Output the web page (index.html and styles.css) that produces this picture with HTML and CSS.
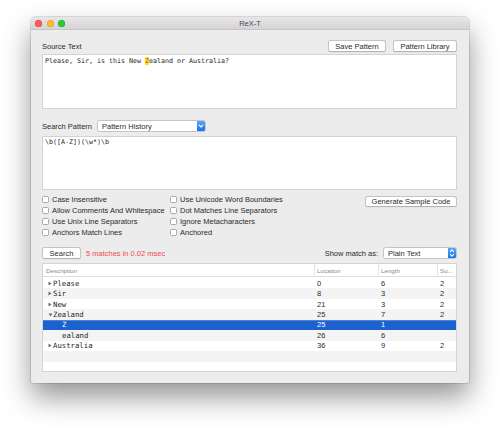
FILE: index.html
```html
<!DOCTYPE html>
<html>
<head>
<meta charset="utf-8">
<title>ReX-T</title>
<link rel="stylesheet" href="styles.css">
</head>
<body>
<div class="window">
  <div class="titlebar">
    <div class="lights">
      <span class="light red"></span>
      <span class="light yellow"></span>
      <span class="light green"></span>
    </div>
    <div class="title">ReX-T</div>
  </div>
  <div class="content">
    <div class="row row-source">
      <span class="label">Source Text</span>
      <div class="btns">
        <button class="btn btn-save">Save Pattern</button>
        <button class="btn btn-lib">Pattern Library</button>
      </div>
    </div>
    <div class="textbox source">Please, Sir, is this New <span class="hl">Z</span>ealand or Australia?</div>
    <div class="row row-pattern">
      <span class="label">Search Pattern</span>
      <div class="popup popup-history">
        <span class="popup-text">Pattern History</span>
        <span class="popup-cap">
          <svg width="8" height="12" viewBox="0 0 8 12"><path d="M2.2 5.2 L4 7 L5.8 5.2" fill="none" stroke="#fff" stroke-width="1.1" stroke-linecap="round" stroke-linejoin="round"/></svg>
        </span>
      </div>
    </div>
    <div class="textbox pattern">\b([A-Z])(\w*)\b</div>
    <div class="options">
      <div class="checks">
        <label class="check"><span class="box"></span>Case Insensitive</label>
        <label class="check"><span class="box"></span>Use Unicode Word Boundaries</label>
        <label class="check"><span class="box"></span>Allow Comments And Whitespace</label>
        <label class="check"><span class="box"></span>Dot Matches Line Separators</label>
        <label class="check"><span class="box"></span>Use Unix Line Separators</label>
        <label class="check"><span class="box"></span>Ignore Metacharacters</label>
        <label class="check"><span class="box"></span>Anchors Match Lines</label>
        <label class="check"><span class="box"></span>Anchored</label>
      </div>
      <button class="btn btn-gen">Generate Sample Code</button>
    </div>
    <div class="row row-search">
      <button class="btn btn-search">Search</button>
      <span class="status">5 matches in 0.02 msec</span>
      <span class="spacer"></span>
      <span class="label show-label">Show match as:</span>
      <div class="popup popup-show">
        <span class="popup-text">Plain Text</span>
        <span class="popup-cap">
          <svg width="8" height="12" viewBox="0 0 8 12"><path d="M2.3 4.6 L4 2.9 L5.7 4.6 M2.3 7.4 L4 9.1 L5.7 7.4" fill="none" stroke="#fff" stroke-width="1.1" stroke-linecap="round" stroke-linejoin="round"/></svg>
        </span>
      </div>
    </div>
    <div class="table">
      <div class="thead">
        <div class="cell c-desc">Description</div>
        <div class="cell c-loc">Location</div>
        <div class="cell c-len">Length</div>
        <div class="cell c-sub">Su...</div>
      </div>
      <div class="tbody">
        <div class="tr">
          <div class="cell c-desc"><span class="tri"><svg width="4" height="5" viewBox="0 0 4 5"><path d="M0.5 0.5 L3.5 2.5 L0.5 4.5 Z" fill="#6a6a6a"/></svg></span><span class="mono">Please</span></div>
          <div class="cell c-loc">0</div><div class="cell c-len">6</div><div class="cell c-sub">2</div>
        </div>
        <div class="tr alt">
          <div class="cell c-desc"><span class="tri"><svg width="4" height="5" viewBox="0 0 4 5"><path d="M0.5 0.5 L3.5 2.5 L0.5 4.5 Z" fill="#6a6a6a"/></svg></span><span class="mono">Sir</span></div>
          <div class="cell c-loc">8</div><div class="cell c-len">3</div><div class="cell c-sub">2</div>
        </div>
        <div class="tr">
          <div class="cell c-desc"><span class="tri"><svg width="4" height="5" viewBox="0 0 4 5"><path d="M0.5 0.5 L3.5 2.5 L0.5 4.5 Z" fill="#6a6a6a"/></svg></span><span class="mono">New</span></div>
          <div class="cell c-loc">21</div><div class="cell c-len">3</div><div class="cell c-sub">2</div>
        </div>
        <div class="tr alt">
          <div class="cell c-desc"><span class="tri"><svg width="5" height="4" viewBox="0 0 5 4"><path d="M0.5 0.5 L4.5 0.5 L2.5 3.5 Z" fill="#6a6a6a"/></svg></span><span class="mono">Zealand</span></div>
          <div class="cell c-loc">25</div><div class="cell c-len">7</div><div class="cell c-sub">2</div>
        </div>
        <div class="tr selected">
          <div class="cell c-desc child"><span class="mono">Z</span></div>
          <div class="cell c-loc">25</div><div class="cell c-len">1</div><div class="cell c-sub"></div>
        </div>
        <div class="tr alt">
          <div class="cell c-desc child"><span class="mono">ealand</span></div>
          <div class="cell c-loc">26</div><div class="cell c-len">6</div><div class="cell c-sub"></div>
        </div>
        <div class="tr">
          <div class="cell c-desc"><span class="tri"><svg width="4" height="5" viewBox="0 0 4 5"><path d="M0.5 0.5 L3.5 2.5 L0.5 4.5 Z" fill="#6a6a6a"/></svg></span><span class="mono">Australia</span></div>
          <div class="cell c-loc">36</div><div class="cell c-len">9</div><div class="cell c-sub">2</div>
        </div>
        <div class="tr alt empty"></div>
        <div class="tr empty"></div>
      </div>
    </div>
  </div>
</div>
</body>
</html>
```

FILE: styles.css
```css
* {
  box-sizing: border-box;
}

html, body {
  margin: 0;
  padding: 0;
  background: #ffffff;
}

body {
  font-family: "Liberation Sans", Arial, sans-serif;
  font-size: 7.5px;
  color: #2b2b2b;
  width: 500px;
  height: 428px;
  overflow: hidden;
}

.window {
  margin: 17px 0 0 31px;
  width: 438px;
  height: 366px;
  background: #ececec;
  border-radius: 4px 4px 2px 2px;
  box-shadow: 0 0 0 0.5px rgba(0, 0, 0, 0.22), 0 14px 28px rgba(0, 0, 0, 0.42);
  display: flex;
  flex-direction: column;
  overflow: hidden;
}

.titlebar {
  height: 13px;
  flex: none;
  display: flex;
  align-items: center;
  position: relative;
  background: linear-gradient(#e8e6e8, #d6d4d6);
  border-bottom: 1px solid #c6c6c6;
}

.lights {
  display: flex;
  gap: 4.5px;
  padding-left: 4px;
}

.light {
  width: 7px;
  height: 7px;
  border-radius: 50%;
}

.light.red { background: #fc5f57; box-shadow: inset 0 0 0 0.5px #df4744; }
.light.yellow { background: #fdbc2e; box-shadow: inset 0 0 0 0.5px #de9f34; }
.light.green { background: #29c940; box-shadow: inset 0 0 0 0.5px #27aa35; }

.title {
  position: absolute;
  left: 0;
  right: 0;
  top: 0;
  bottom: 0;
  display: flex;
  align-items: center;
  justify-content: center;
  color: #4a4a4a;
  font-size: 7.5px;
}

.content {
  flex: 1;
  display: flex;
  flex-direction: column;
  padding: 10px 12px 11px 11px;
}

.row {
  display: flex;
  align-items: center;
  height: 12px;
  flex: none;
}

.label {
  color: #2b2b2b;
  font-size: 7.5px;
  white-space: nowrap;
}

.row-source {
  justify-content: space-between;
  margin-bottom: 2px;
}

.row-source .label {
  padding-top: 1px;
}

.btns {
  display: flex;
  gap: 7px;
}

.btn {
  font-family: "Liberation Sans", Arial, sans-serif;
  font-size: 7.5px;
  color: #2b2b2b;
  background: #ffffff;
  border: 0.5px solid #c4c4c4;
  border-bottom-color: #b4b4b4;
  border-radius: 2.5px;
  height: 12px;
  padding: 0;
  margin: 0;
  display: flex;
  align-items: center;
  justify-content: center;
  white-space: nowrap;
  box-shadow: 0 0.5px 0 rgba(0, 0, 0, 0.06);
}

.btn-save { width: 58px; }
.btn-lib { width: 64px; }

.textbox {
  background: #ffffff;
  border: 1px solid #d3d3d3;
  font-family: "DejaVu Sans Mono", "Liberation Mono", monospace;
  font-size: 6.65px;
  line-height: 9px;
  color: #1e1e1e;
  padding: 2px 2px;
  white-space: pre;
  flex: none;
}

.textbox.source {
  height: 55px;
  margin-bottom: 11px;
}

.hl {
  background: #ffe11a;
  color: #d2451c;
}

.row-pattern {
  gap: 5px;
  margin-bottom: 4px;
}

.popup {
  display: flex;
  align-items: stretch;
  height: 12px;
  background: #ffffff;
  border: 0.5px solid #c4c4c4;
  border-radius: 2.5px;
  overflow: hidden;
}

.popup-text {
  flex: 1;
  display: flex;
  align-items: center;
  padding-left: 4px;
  color: #2b2b2b;
  font-size: 7.5px;
}

.popup-cap {
  width: 8px;
  flex: none;
  background: linear-gradient(#5aa2fb, #1a74f0);
  display: flex;
  align-items: center;
  justify-content: center;
}

.popup-history { width: 109px; }
.popup-show { width: 74px; }

.textbox.pattern {
  height: 54px;
  padding-top: 1px;
  margin-bottom: 4px;
}

.options {
  display: flex;
  justify-content: space-between;
  align-items: flex-start;
  height: 44px;
  flex: none;
  margin-bottom: 9px;
}

.checks {
  display: grid;
  grid-template-columns: 128px auto;
  grid-auto-rows: 11px;
}

.check {
  display: flex;
  align-items: center;
  gap: 3px;
  white-space: nowrap;
  color: #2b2b2b;
}

.box {
  width: 7px;
  height: 7px;
  background: #ffffff;
  border: 0.5px solid #a9a9a9;
  border-radius: 1.5px;
  flex: none;
}

.btn-gen {
  width: 92px;
  height: 11px;
  margin-top: 2px;
}

.row-search {
  margin-bottom: 4px;
}

.btn-search {
  width: 39px;
  height: 11.5px;
}

.status {
  color: #f24b4d;
  margin-left: 5px;
  white-space: nowrap;
}

.spacer {
  flex: 1;
}

.show-label {
  margin-right: 5px;
}

.table {
  height: 109px;
  flex: none;
  background: #ffffff;
  border: 1px solid #d3d3d3;
  display: flex;
  flex-direction: column;
  overflow: hidden;
}

.thead {
  display: grid;
  grid-template-columns: 271px 64px 59px 1fr;
  height: 13px;
  flex: none;
  border-bottom: 1px solid #dddddd;
  color: #8a8a8a;
  font-size: 6.2px;
}

.thead .cell {
  display: flex;
  align-items: center;
  padding-left: 3px;
  white-space: nowrap;
}

.thead .cell + .cell {
  border-left: 1px solid #e3e3e3;
  padding-left: 2px;
}

.tbody {
  display: flex;
  flex-direction: column;
  padding-top: 1px;
}

.tr {
  display: grid;
  grid-template-columns: 271px 64px 59px 1fr;
  height: 10.45px;
  align-items: center;
  color: #2b2b2b;
  background: #ffffff;
}

.tr.alt {
  background: #f4f4f4;
}

.tr.selected {
  background: #1c62cf;
  color: #ffffff;
  box-shadow: inset 0 0.5px 0 #7aa6e6;
}

.tr .cell {
  display: flex;
  align-items: center;
  white-space: nowrap;
  font-size: 7.5px;
}

.tr .c-desc {
  padding-left: 5px;
}

.tr .c-desc.child {
  padding-left: 19px;
}

.tr .c-loc,
.tr .c-len,
.tr .c-sub {
  padding-left: 3px;
}

.tri {
  width: 5px;
  display: flex;
  align-items: center;
}

.mono {
  font-family: "DejaVu Sans Mono", "Liberation Mono", monospace;
  font-size: 7.3px;
  color: #1e1e1e;
}

.tr.selected .mono {
  color: #ffffff;
}
```
